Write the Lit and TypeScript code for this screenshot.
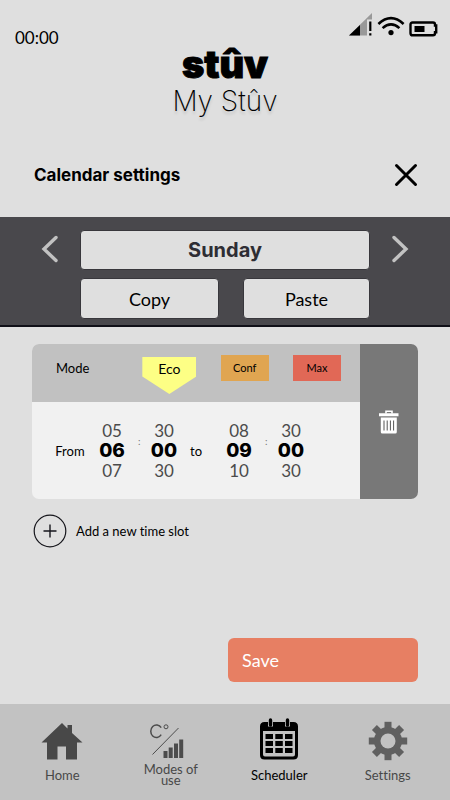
import { LitElement, html, css, svg } from "lit";
import { customElement, state } from "lit/decorators.js";

const batteryIcon = svg`<svg width="30" height="16" viewBox="0 0 30 16" fill="none" stroke="#000" aria-hidden="true">
  <path d="M3.500 1.500h20.500q2 0 2 2v1h1.200v6.800h-1.200v1q0 2-2 2h-20.500q-2 0-2-2v-8.800q0-2 2-2z" stroke-width="2.400"/>
  <path d="M5.500 5h10v6h-10z" fill="#000" stroke="none"/></svg>`;

const wifiIcon = svg`<svg width="28" height="22" viewBox="0 0 30 22" fill="none" stroke="#000" stroke-width="2.800" aria-hidden="true">
  <path d="M1.500 8.800Q15-3.500 28.500 8.800M6 13.300Q15 5.300 24 13.300"/><circle cx="15" cy="18" r="2.800" fill="#000" stroke="none"/></svg>`;

const signalIcon = svg`<svg width="24" height="24" viewBox="0 0 24 24" aria-hidden="true">
  <path d="M0 22.500 23 0V6.500H18v16z" fill="#999"/><path d="M0 22.500 11 12v10.500z"/><path d="M20.200 8.500h2.200v9.500h-2.200zM20.200 20.200h2.200v2.300h-2.200z"/></svg>`;

const closeIcon = svg`<svg width="24" height="24" viewBox="0 0 24 24" stroke="#000" stroke-width="3" stroke-linecap="round" aria-hidden="true"><path d="m2.500 2.500 19 19m0-19-19 19"/></svg>`;

const prevIcon = svg`<svg width="18" height="28" viewBox="0 0 18 28" fill="none" stroke="#c2c2c2" stroke-width="3.400" stroke-linecap="round" aria-hidden="true"><path d="M15 2.500 3 14l12 11.500"/></svg>`;
const nextIcon = svg`<svg width="18" height="28" viewBox="0 0 18 28" fill="none" stroke="#c2c2c2" stroke-width="3.400" stroke-linecap="round" aria-hidden="true"><path d="M3 2.500 15 14 3 25.500"/></svg>`;

const trashIcon = svg`<svg width="20" height="24" viewBox="0 0 20 24" aria-hidden="true">
  <path d="M7 3.500V1.200h6v2.300" fill="none" stroke="#fff" stroke-width="1.600"/>
  <path d="M0 3.300h19.500v3H0zM1.800 7.500h16V22q0 1.500-1.500 1.500h-13q-1.500 0-1.500-1.500z" fill="#fff"/>
  <path d="M5 10.500v10M8.200 10.500v10M11.400 10.500v10M14.600 10.500v10" stroke="#555" stroke-width="1"/></svg>`;

const plusIcon = svg`<svg width="34" height="34" viewBox="0 0 34 34" fill="none" stroke="#16161c" aria-hidden="true">
  <circle cx="17" cy="17" r="15.800" stroke-width="1.200"/><path d="M17 10.500v13M10.500 17h13" stroke-width="1.400"/></svg>`;

const homeIcon = svg`<svg width="42" height="38" viewBox="0 0 42 38" fill="#484848" aria-hidden="true">
  <path d="M21 1 26.500 6.500V3H31v8L41.500 20.500H36V37.500H25V24.500H16.500V37.500H6V20.500H.5z"/></svg>`;

const modesIcon = svg`<svg width="44" height="40" viewBox="0 -3 44 40" fill="#4c4c4c" aria-hidden="true">
  <path d="M12.200 3.700A5.700 6.300 0 1 0 12.200 10.700" fill="none" stroke="#4c4c4c" stroke-width="1.500"/>
  <circle cx="17" cy="2.800" r="2" fill="none" stroke="#4c4c4c"/>
  <path d="M3.500 30.500 29.500 4" stroke="#4c4c4c"/>
  <path d="M14.500 27h4v7h-4zM19.700 23.500h4V34h-4zM25 19.500h4V34h-4zM30.200 15.500h4V34h-4z"/></svg>`;

const calendarIcon = svg`<svg width="38" height="46" viewBox="0 0 38 46" aria-hidden="true">
  <path fill-rule="evenodd" d="M4.500 4h29q4.500 0 4.500 4.500v28.500q0 4.500-4.500 4.500h-29q-4.500 0-4.500-4.500v-28.500q0-4.500 4.500-4.500zM3 13v23.500q0 2 2 2h28q2 0 2-2V13z"/>
  <path d="M8 .5h5v8H8zM25 .5h5v8h-5z" fill="#c2c2c2"/>
  <path d="M10.500 2v5M27.500 2v5" stroke="#000" stroke-width="3.400" stroke-linecap="round"/>
  <path d="M5.500 16h7.500v5H5.500zM15.300 16h7.500v5h-7.500zM25 16h7.500v5H25zM5.500 23h7.500v5H5.500zM15.300 23h7.500v5h-7.500zM25 23h7.500v5H25zM5.500 30h7.500v5H5.500zM15.300 30h7.500v5h-7.500zM25 30h7.500v5H25z"/></svg>`;

const gearIcon = svg`<svg width="40" height="40" viewBox="0 0 40 40" aria-hidden="true">
  <g fill="#606060">${[0, 45, 90, 135].map((a) => svg`<path transform="rotate(${a} 20 20)" d="M16.500 .8h7v38.400h-7z"/>`)}<circle cx="20" cy="20" r="14"/></g>
  <circle cx="20" cy="20" r="7.500" fill="#c2c2c2"/></svg>`;

@customElement("app-root")
export class AppRoot extends LitElement {
  @state() private mode = "Eco";

  static styles = css`
    :host {
      display: flex;
      flex-direction: column;
      min-height: 100vh;
      background: #dfdfdf;
      color: #000;
      font-family: Lato, "Liberation Sans", sans-serif;
      font-size: 13px;
      line-height: 20px;
      font-variant-ligatures: none;
    }
    * { box-sizing: border-box; }
    svg { display: block; flex: none; }
    button { font: inherit; font-variant-ligatures: none; color: inherit; border: 0; padding: 0; margin: 0; background: none; cursor: pointer; }
    h1, h2, p { margin: 0; }
    .status { display: flex; justify-content: space-between; padding: 13px 11px 0 15px; height: 48px; }
    .clock { font-size: 17px; padding-top: 15px; }
    .icons { display: flex; align-items: flex-end; gap: 4px; height: 24px; }
    .brand { text-align: center; }
    .logo { font: 900 38px/32px Inter, sans-serif; -webkit-text-stroke: 1px #000; }
    .name { font: 200 28px/32px Inter, sans-serif; text-shadow: 0 3px 3px #0002; margin-top: 5px; }
    .title { display: flex; align-items: center; justify-content: space-between; padding: 0 32px 0 34px; height: 85px; margin-top: 15px; }
    .title h2 { font: 700 17px/20px Inter, sans-serif; }
    .band { display: grid; grid-template-columns: 80px 1fr 80px; background: #49484c; padding: 13px 0 6px; border-bottom: 2px solid #101018; }
    .band .arrow { display: flex; justify-content: center; align-items: center; height: 38px; padding-left: 20px; }
    .band .next { padding: 0 20px 0 0; }
    .rows { display: flex; flex-direction: column; gap: 8px; }
    .pair { display: grid; grid-template-columns: 139fr 127fr; gap: 24px; }
    .box { height: 41px; border-radius: 4px; border: 1px solid #38373c; background: #dfdfdf; font-size: 18px; text-align: center; }
    .day { height: 40px; font: 700 20px/38px Inter, sans-serif; color: #2e2d34; }
    .slot { display: grid; grid-template-columns: 1fr 58px; margin: 17px 32px 0; border-radius: 7px; overflow: hidden; background: #f1f1f1; }
    .modes { display: flex; justify-content: space-between; padding: 11px 19px 0 24px; background: #c1c1c1; height: 58px; }
    .modes .label { padding-top: 3px; width: 62px; }
    .mode { height: 26px; width: 48px; font-size: 11px; }
    .conf { background: #e0a551; }
    .max { background: #e16856; }
    .picked { height: 37px; width: 54px; margin-top: 2px; font-size: 14px; padding-bottom: 13px; clip-path: polygon(0 0, 100% 0, 100% 53%, 50% 100%, 0 53%); }
    .eco { background: #fdff85; }
    .times { display: flex; align-items: center; padding-left: 22px; height: 97px; }
    .word { width: 32px; text-align: center; }
    .to { width: 23px; text-align: left; }
    .wheel { display: flex; flex-direction: column; align-items: center; width: 52px; font-size: 17px; color: #4b4b4b; }
    .wheel strong { font: 800 19px/20px Inter, sans-serif; color: #000; }
    .colon { width: 0; font-size: 10px; padding-bottom: 20px; color: #777; }
    .trash { display: grid; place-items: center; background: #787878; }
    .add { display: flex; align-items: center; gap: 9px; align-self: flex-start; margin: 15px 33px 0; }
    .save { align-self: flex-end; width: calc(50% - 35px); height: 44px; margin: auto 32px 22px; padding-left: 14px; text-align: left; font-size: 18px; color: #fff; background: #e77f63; border-radius: 6px; }
    nav { display: grid; grid-template-columns: repeat(4, 1fr); padding: 0 8px; height: 96px; background: #c2c2c2; }
    nav a { display: flex; flex-direction: column; align-items: center; padding-top: 14px; color: #484848; text-decoration: none; line-height: 11px; text-align: center; }
    nav .pic { display: flex; align-items: center; height: 46px; margin-bottom: 6px; }
    nav .wrap span:last-child { width: 64px; margin-top: -6px; }
    nav .on { color: #000; }
  `;

  private wheel(a: string, b: string, c: string) {
    return html`<div class="wheel"><span>${a}</span><strong>${b}</strong><span>${c}</span></div>`;
  }

  render() {
    return html`
      <div class="status"><span class="clock">00:00</span><div class="icons">${signalIcon}${wifiIcon}${batteryIcon}</div></div>
      <header class="brand"><div class="logo">stûv</div><h1 class="name">My Stûv</h1></header>
      <div class="title"><h2>Calendar settings</h2><button aria-label="Close">${closeIcon}</button></div>
      <section class="band">
        <button class="arrow" aria-label="Previous day">${prevIcon}</button>
        <div class="rows">
          <button class="box day">Sunday</button>
          <div class="pair"><button class="box">Copy</button><button class="box">Paste</button></div>
        </div>
        <button class="arrow next" aria-label="Next day">${nextIcon}</button>
      </section>
      <section class="slot">
        <div>
          <div class="modes"><span class="label">Mode</span>
            ${["Eco", "Conf", "Max"].map((m) => html`<button class="mode ${m.toLowerCase()} ${m === this.mode ? "picked" : ""}" @click=${() => (this.mode = m)}>${m}</button>`)}
          </div>
          <div class="times"><span class="word">From</span>${this.wheel("05", "06", "07")}<span class="colon">:</span>${this.wheel("30", "00", "30")}<span class="word to">to</span>${this.wheel("08", "09", "10")}<span class="colon">:</span>${this.wheel("30", "00", "30")}</div>
        </div>
        <button class="trash" aria-label="Delete time slot">${trashIcon}</button>
      </section>
      <button class="add">${plusIcon}<span>Add a new time slot</span></button>
      <button class="save">Save</button>
      <nav>
        <a href="#home"><span class="pic">${homeIcon}</span><span>Home</span></a>
        <a href="#modes" class="wrap"><span class="pic">${modesIcon}</span><span>Modes of use</span></a>
        <a href="#scheduler" class="on"><span class="pic">${calendarIcon}</span><span>Scheduler</span></a>
        <a href="#settings"><span class="pic">${gearIcon}</span><span>Settings</span></a>
      </nav>`;
  }
}
